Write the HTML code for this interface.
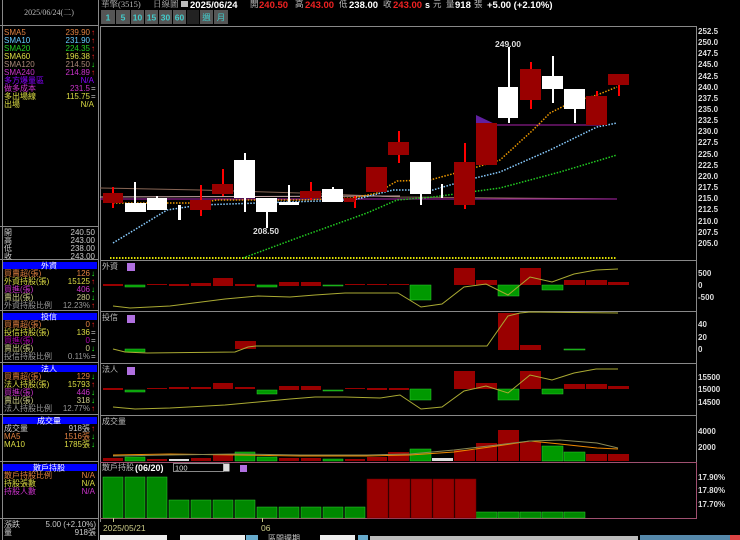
<!DOCTYPE html>
<html><head><meta charset="utf-8"><style>
body{margin:0;background:#000;width:740px;height:540px;overflow:hidden;font-family:"Liberation Sans","Noto Sans CJK TC",sans-serif}
svg{display:block}
text{font-family:"Liberation Sans","Noto Sans CJK TC",sans-serif}
.s{font-family:"Liberation Serif","Noto Serif CJK SC",serif}
</style></head><body>
<svg width="740" height="540" viewBox="0 0 740 540" xmlns="http://www.w3.org/2000/svg">
<rect width="740" height="540" fill="#000"/>
<g stroke="#888" stroke-width="1" fill="none">
<line x1="98.5" y1="0" x2="98.5" y2="540"/>
<line x1="2.5" y1="0" x2="2.5" y2="540"/>
<line x1="0" y1="25.5" x2="98" y2="25.5"/>
<line x1="0" y1="226.5" x2="98" y2="226.5"/>
<line x1="0" y1="259.5" x2="98" y2="259.5"/>
<line x1="0" y1="310.5" x2="98" y2="310.5"/>
<line x1="0" y1="362.5" x2="98" y2="362.5"/>
<line x1="0" y1="414.5" x2="98" y2="414.5"/>
<line x1="0" y1="461.5" x2="98" y2="461.5"/>
<line x1="0" y1="518.5" x2="98" y2="518.5"/>
</g>
<g font-size="8" class="s">
<text x="49" y="15" fill="#bbb" text-anchor="middle" class="s">2025/06/24(二)</text>
<text x="4" y="35" fill="#e08040">SMA5</text><text x="90" y="35" fill="#e08040" text-anchor="end">239.90</text><text x="91" y="35" fill="#f22">↑</text>
<text x="4" y="43" fill="#6cf">SMA10</text><text x="90" y="43" fill="#6cf" text-anchor="end">231.90</text><text x="91" y="43" fill="#f22">↑</text>
<text x="4" y="51" fill="#2c2">SMA20</text><text x="90" y="51" fill="#2c2" text-anchor="end">224.35</text><text x="91" y="51" fill="#f22">↑</text>
<text x="4" y="59" fill="#dd4">SMA60</text><text x="90" y="59" fill="#dd4" text-anchor="end">196.38</text><text x="91" y="59" fill="#f22">↑</text>
<text x="4" y="67" fill="#a87">SMA120</text><text x="90" y="67" fill="#a87" text-anchor="end">214.50</text><text x="91" y="67" fill="#2f2">↓</text>
<text x="4" y="75" fill="#c3c">SMA240</text><text x="90" y="75" fill="#c3c" text-anchor="end">214.89</text><text x="91" y="75" fill="#f22">↑</text>
<text x="4" y="83" fill="#80f">多方爆量區</text><text x="94" y="83" fill="#80f" text-anchor="end">N/A</text>
<text x="4" y="91" fill="#c3c">做多成本</text><text x="90" y="91" fill="#c3c" text-anchor="end">231.5</text><text x="91" y="91" fill="#ccc">=</text>
<text x="4" y="99" fill="#dd4">多出場線</text><text x="90" y="99" fill="#dd4" text-anchor="end">115.75</text><text x="91" y="99" fill="#ccc">=</text>
<text x="4" y="107" fill="#dd4">出場</text><text x="94" y="107" fill="#dd4" text-anchor="end">N/A</text>

<g fill="#ccc"><text x="4" y="235">開</text><text x="95" y="235" text-anchor="end">240.50</text>
<text x="4" y="243">高</text><text x="95" y="243" text-anchor="end">243.00</text>
<text x="4" y="251">低</text><text x="95" y="251" text-anchor="end">238.00</text>
<text x="4" y="259">收</text><text x="95" y="259" text-anchor="end">243.00</text></g>

<rect x="3" y="262" width="94" height="7" fill="#00f"/><text x="49" y="268.5" fill="#fff" text-anchor="middle">外資</text>
<text x="4" y="276" fill="#e08040">買賣超(張)</text><text x="90" y="276" fill="#e08040" text-anchor="end">126</text><text x="91" y="276" fill="#2f2">↓</text>
<text x="4" y="284" fill="#dd4">外資持股(張)</text><text x="90" y="284" fill="#dd4" text-anchor="end">15125</text><text x="91" y="284" fill="#f22">↑</text>
<text x="4" y="292" fill="#c3c">買進(張)</text><text x="90" y="292" fill="#c3c" text-anchor="end">406</text><text x="91" y="292" fill="#2f2">↓</text>
<text x="4" y="300" fill="#cc8">賣出(張)</text><text x="90" y="300" fill="#cc8" text-anchor="end">280</text><text x="91" y="300" fill="#2f2">↓</text>
<text x="4" y="308" fill="#999">外資持股比例</text><text x="90" y="308" fill="#999" text-anchor="end">12.23%</text><text x="91" y="308" fill="#f22">↑</text>

<rect x="3" y="313" width="94" height="7" fill="#00f"/><text x="49" y="319.5" fill="#fff" text-anchor="middle">投信</text>
<text x="4" y="327" fill="#e08040">買賣超(張)</text><text x="90" y="327" fill="#e08040" text-anchor="end">0</text><text x="91" y="327" fill="#f22">↑</text>
<text x="4" y="335" fill="#dd4">投信持股(張)</text><text x="90" y="335" fill="#dd4" text-anchor="end">136</text><text x="91" y="335" fill="#ccc">=</text>
<text x="4" y="343" fill="#a0a">買進(張)</text><text x="90" y="343" fill="#a0a" text-anchor="end">0</text><text x="91" y="343" fill="#ccc">=</text>
<text x="4" y="351" fill="#cc8">賣出(張)</text><text x="90" y="351" fill="#cc8" text-anchor="end">0</text><text x="91" y="351" fill="#2f2">↓</text>
<text x="4" y="359" fill="#999">投信持股比例</text><text x="90" y="359" fill="#999" text-anchor="end">0.11%</text><text x="91" y="359" fill="#ccc">=</text>

<rect x="3" y="365" width="94" height="7" fill="#00f"/><text x="49" y="371.5" fill="#fff" text-anchor="middle">法人</text>
<text x="4" y="379" fill="#e08040">買賣超(張)</text><text x="90" y="379" fill="#e08040" text-anchor="end">129</text><text x="91" y="379" fill="#2f2">↓</text>
<text x="4" y="387" fill="#dd4">法人持股(張)</text><text x="90" y="387" fill="#dd4" text-anchor="end">15793</text><text x="91" y="387" fill="#f22">↑</text>
<text x="4" y="395" fill="#c3c">買進(張)</text><text x="90" y="395" fill="#c3c" text-anchor="end">446</text><text x="91" y="395" fill="#2f2">↓</text>
<text x="4" y="403" fill="#cc8">賣出(張)</text><text x="90" y="403" fill="#cc8" text-anchor="end">318</text><text x="91" y="403" fill="#2f2">↓</text>
<text x="4" y="411" fill="#999">法人持股比例</text><text x="90" y="411" fill="#999" text-anchor="end">12.77%</text><text x="91" y="411" fill="#f22">↑</text>

<rect x="3" y="417" width="94" height="7" fill="#00f"/><text x="49" y="423.5" fill="#fff" text-anchor="middle">成交量</text>
<text x="4" y="431" fill="#ccc">成交量</text><text x="90" y="431" fill="#ccc" text-anchor="end">918張</text><text x="91" y="431" fill="#f22">↑</text>
<text x="4" y="439" fill="#e08040">MA5</text><text x="90" y="439" fill="#e08040" text-anchor="end">1516張</text><text x="91" y="439" fill="#2f2">↓</text>
<text x="4" y="447" fill="#dd4">MA10</text><text x="90" y="447" fill="#dd4" text-anchor="end">1785張</text><text x="91" y="447" fill="#2f2">↓</text>

<rect x="3" y="464" width="94" height="7" fill="#00f"/><text x="49" y="470.5" fill="#fff" text-anchor="middle">散戶持股</text>
<text x="4" y="478" fill="#e08040">散戶持股比例</text><text x="95" y="478" fill="#e08040" text-anchor="end">N/A</text>
<text x="4" y="486" fill="#dd4">持股張數</text><text x="95" y="486" fill="#dd4" text-anchor="end">N/A</text>
<text x="4" y="494" fill="#c3c">持股人數</text><text x="95" y="494" fill="#c3c" text-anchor="end">N/A</text>
<text x="4" y="527" fill="#ccc">漲跌</text><text x="96" y="527" fill="#ccc" text-anchor="end">5.00 (+2.10%)</text>
<text x="4" y="535" fill="#ccc">量</text><text x="96" y="535" fill="#ccc" text-anchor="end">918張</text>
</g>

<g font-size="8.5">
<text x="101" y="7" fill="#bbb" class="s">華擎(3515)</text>
<text x="153" y="7" fill="#bbb" class="s">日線圖</text>
<rect x="181" y="1" width="7" height="6" fill="#bbb"/>
<text x="190" y="8" fill="#fff" font-weight="bold" font-size="9.5">2025/06/24</text>
<text x="250" y="7" fill="#bbb">開</text><text x="259" y="8" fill="#e22" font-weight="bold" font-size="9.5">240.50</text>
<text x="295" y="7" fill="#bbb">高</text><text x="305" y="8" fill="#e22" font-weight="bold" font-size="9.5">243.00</text>
<text x="339" y="7" fill="#bbb">低</text><text x="349" y="8" fill="#fff" font-weight="bold" font-size="9.5">238.00</text>
<text x="383" y="7" fill="#bbb">收</text><text x="393" y="8" fill="#e22" font-weight="bold" font-size="9.5">243.00</text>
<text x="425" y="8" fill="#fff" font-weight="bold" font-size="9">s</text><text x="433" y="7" fill="#bbb">元</text>
<text x="446" y="7" fill="#bbb">量</text><text x="455" y="8" fill="#fff" font-weight="bold" font-size="9.5">918</text>
<text x="474" y="7" fill="#bbb">張</text>
<text x="487" y="8" fill="#fff" font-weight="bold" font-size="9.5">+5.00 (+2.10%)</text>
</g>
<g font-size="8.5" fill="#4cc" font-weight="bold" text-anchor="middle">
<rect x="101" y="10" width="14" height="14" fill="#555"/><text x="108" y="20.5">1</text>
<rect x="116" y="10" width="14" height="14" fill="#555"/><text x="123" y="20.5">5</text>
<rect x="131" y="10" width="13" height="14" fill="#555"/><text x="137.5" y="20.5">10</text>
<rect x="145" y="10" width="13" height="14" fill="#555"/><text x="151.5" y="20.5">15</text>
<rect x="159" y="10" width="13" height="14" fill="#555"/><text x="165.5" y="20.5">30</text>
<rect x="173" y="10" width="13" height="14" fill="#555"/><text x="179.5" y="20.5">60</text>
<rect x="187" y="10" width="12" height="14" fill="#222"/>
<rect x="200" y="10" width="13" height="14" fill="#555"/><text x="206.5" y="20.5" font-weight="normal">週</text>
<rect x="214" y="10" width="14" height="14" fill="#555"/><text x="221" y="20.5" font-weight="normal">月</text>
</g>

<g stroke="#888" fill="none">
<line x1="100" y1="26.5" x2="697" y2="26.5"/>
<line x1="100.5" y1="26" x2="100.5" y2="522"/>
<line x1="696.5" y1="26" x2="696.5" y2="462"/>
<line x1="100" y1="260.5" x2="697" y2="260.5"/>
<line x1="100" y1="311.5" x2="697" y2="311.5"/>
<line x1="100" y1="363.5" x2="697" y2="363.5"/>
<line x1="100" y1="415.5" x2="697" y2="415.5"/>
<line x1="100" y1="462.5" x2="697" y2="462.5" stroke="#a05070"/>
<line x1="100" y1="518.5" x2="697" y2="518.5" stroke="#a05070"/>
<line x1="696.5" y1="462" x2="696.5" y2="519" stroke="#a05070"/>
</g>
<g font-size="8" fill="#ddd" font-weight="bold">
<text x="698" y="34">252.5</text><text x="698" y="45">250.0</text><text x="698" y="56">247.5</text><text x="698" y="67">245.0</text>
<text x="698" y="79">242.5</text><text x="698" y="90">240.0</text><text x="698" y="101">237.5</text><text x="698" y="112">235.0</text>
<text x="698" y="123">232.5</text><text x="698" y="134">230.0</text><text x="698" y="145">227.5</text><text x="698" y="157">225.0</text>
<text x="698" y="168">222.5</text><text x="698" y="179">220.0</text><text x="698" y="190">217.5</text><text x="698" y="201">215.0</text>
<text x="698" y="212">212.5</text><text x="698" y="224">210.0</text><text x="698" y="235">207.5</text><text x="698" y="246">205.0</text>
<text x="698" y="276">500</text><text x="698" y="288">0</text><text x="698" y="300">-500</text>
<text x="698" y="327">40</text><text x="698" y="340">20</text><text x="698" y="352">0</text>
<text x="698" y="380">15500</text><text x="698" y="392">15000</text><text x="698" y="405">14500</text>
<text x="698" y="434">4000</text><text x="698" y="450">2000</text>
<text x="698" y="480">17.90%</text><text x="698" y="493">17.80%</text><text x="698" y="507">17.70%</text>
</g>

<polyline points="100,188 200,190 300,193 400,197 617,199" stroke="#865" fill="none"/>
<line x1="100" y1="199" x2="617" y2="199" stroke="#a2a"/>
<line x1="100" y1="197" x2="400" y2="196" stroke="#caa"/>
<line x1="476" y1="125" x2="600" y2="125" stroke="#a2a"/>
<polygon points="476,115 497,125 476,135" fill="#6020a0"/>
<polyline points="110,258 617,258" stroke="#dd0" stroke-width="2" stroke-dasharray="1.5,1.5" fill="none"/>
<polyline points="243,258 300,237 367,213 397,200 433,197 500,188 560,172 617,155" stroke="#2c2" stroke-width="1.5" stroke-dasharray="1.5,1.5" fill="none"/>
<polyline points="113,243 167,210 200,205 287,202 353,200 393,190 433,190 467,180 500,172 550,150 597,127 617,123" stroke="#8cf" stroke-width="1.5" stroke-dasharray="1.5,1.5" fill="none"/>
<polyline points="113,203 200,203 217,200 300,200 353,198 377,193 397,181 430,180 467,170 500,160 533,130 550,113 570,103 597,95 617,87" stroke="#e90" stroke-width="1.5" stroke-dasharray="1.5,1.5" fill="none"/>

<g fill="#fff">
<rect x="134" y="182" width="2" height="30"/><rect x="125" y="203" width="21" height="9"/>
<rect x="156" y="196" width="2" height="14"/><rect x="147" y="198" width="20" height="12"/>
<rect x="178" y="205" width="3" height="15"/>
<rect x="244" y="153" width="2" height="59"/><rect x="234" y="160" width="21" height="38"/>
<rect x="266" y="198" width="2" height="30"/><rect x="256" y="198" width="21" height="14"/>
<rect x="288" y="185" width="2" height="20"/><rect x="279" y="202" width="20" height="3"/>
<rect x="332" y="187" width="2" height="15"/><rect x="322" y="189" width="21" height="13"/>
<rect x="420" y="194" width="2" height="11"/><rect x="410" y="162" width="21" height="32"/>
<rect x="441" y="184" width="2" height="14"/>
<rect x="508" y="47" width="2" height="76"/><rect x="498" y="87" width="20" height="31"/>
<rect x="552" y="56" width="2" height="47"/><rect x="542" y="76" width="21" height="13"/>
<rect x="574" y="89" width="2" height="34"/><rect x="564" y="89" width="21" height="20"/>
</g>
<g fill="#f00">
<rect x="112" y="187" width="2" height="21"/><rect x="200" y="185" width="2" height="31"/>
<rect x="222" y="169" width="2" height="27"/><rect x="310" y="182" width="2" height="18"/>
<rect x="354" y="196" width="2" height="12"/><rect x="398" y="131" width="2" height="32"/>
<rect x="464" y="143" width="2" height="66"/><rect x="530" y="62" width="2" height="47"/>
<rect x="596" y="91" width="2" height="34"/><rect x="618" y="84" width="2" height="12"/>
</g>
<g fill="#900">
<rect x="103" y="193" width="20" height="10"/><rect x="190" y="200" width="21" height="10"/>
<rect x="212" y="184" width="21" height="10"/><rect x="300" y="191" width="21" height="7"/>
<rect x="344" y="198" width="11" height="4"/><rect x="366" y="167" width="21" height="25"/>
<rect x="388" y="142" width="21" height="13"/><rect x="454" y="162" width="21" height="43"/>
<rect x="476" y="123" width="21" height="42"/><rect x="520" y="69" width="21" height="31"/>
<rect x="586" y="96" width="21" height="29"/><rect x="608" y="74" width="21" height="11"/>
</g>
<g font-size="8.5" fill="#ddd" font-weight="bold"><text x="495" y="47">249.00</text><text x="253" y="234">208.50</text></g>

<g font-size="8" fill="#bbb" class="s">
<text x="102" y="269">外資</text><text x="102" y="320">投信</text><text x="102" y="372">法人</text><text x="102" y="424">成交量</text>
<text x="102" y="470">散戶持股</text><text x="135" y="471" fill="#fff" font-weight="bold" font-size="9">(06/20)</text>
</g>
<g fill="#b070e0"><rect x="127" y="263" width="8" height="8"/><rect x="127" y="315" width="8" height="8"/><rect x="127" y="367" width="8" height="8"/><rect x="240" y="465" width="7" height="7"/></g>
<rect x="173.5" y="463.5" width="50" height="8" fill="#000" stroke="#888"/><text x="175" y="470.5" font-size="7.5" fill="#ddd">100</text>
<rect x="223.5" y="463.5" width="6" height="8" fill="#ddd"/>

<g fill="#900">
<rect x="103" y="284" width="20" height="2"/><rect x="147" y="284" width="20" height="1"/><rect x="169" y="284" width="20" height="2"/><rect x="191" y="283" width="20" height="3"/>
<rect x="213" y="278" width="20" height="8"/><rect x="235" y="284" width="20" height="2"/><rect x="279" y="282" width="20" height="4"/><rect x="301" y="282" width="20" height="4"/>
<rect x="345" y="284" width="20" height="1"/><rect x="367" y="284" width="20" height="1"/><rect x="389" y="284" width="20" height="1"/>
<rect x="454" y="268" width="21" height="17"/><rect x="476" y="280" width="21" height="5"/><rect x="520" y="268" width="21" height="17"/>
<rect x="564" y="280" width="21" height="5"/><rect x="586" y="280" width="21" height="5"/><rect x="608" y="282" width="21" height="3"/>
</g>
<g fill="#090" stroke="#3c3" stroke-width="0.5">
<rect x="125" y="285" width="20" height="2"/><rect x="257" y="285" width="20" height="2"/><rect x="323" y="285" width="20" height="1"/>
<rect x="410" y="285" width="21" height="15"/><rect x="498" y="285" width="21" height="11"/><rect x="542" y="285" width="21" height="5"/>
</g>
<polyline points="113,306 130,308 170,306 225,299 258,296 290,297 315,295 345,293 398,293 421,307 442,304 464,287 486,284 508,295 530,277 552,282 574,274 596,270 618,269" stroke="#aa3" fill="none"/>
<g fill="#090" stroke="#3c3" stroke-width="0.5"><rect x="125" y="349" width="20" height="3"/><rect x="564" y="349" width="21" height="1"/></g>
<g fill="#900"><rect x="235" y="341" width="21" height="8"/><rect x="498" y="313" width="21" height="37"/><rect x="520" y="345" width="21" height="5"/></g>
<polyline points="113,349 125,352 147,353 235,352 248,347 256,346 487,346 508,316 520,313 530,312 618,313" stroke="#aa3" fill="none"/>
<g fill="#900">
<rect x="103" y="388" width="20" height="2"/><rect x="147" y="388" width="20" height="1"/><rect x="169" y="387" width="20" height="2"/><rect x="191" y="387" width="20" height="2"/>
<rect x="213" y="383" width="20" height="6"/><rect x="235" y="387" width="20" height="2"/><rect x="279" y="386" width="20" height="4"/><rect x="301" y="386" width="20" height="4"/>
<rect x="345" y="388" width="20" height="1"/><rect x="367" y="388" width="20" height="2"/><rect x="389" y="388" width="20" height="2"/>
<rect x="454" y="371" width="21" height="18"/><rect x="476" y="383" width="21" height="6"/><rect x="520" y="371" width="21" height="18"/>
<rect x="564" y="384" width="21" height="5"/><rect x="586" y="384" width="21" height="5"/><rect x="608" y="386" width="21" height="3"/>
</g>
<g fill="#090" stroke="#3c3" stroke-width="0.5">
<rect x="125" y="390" width="20" height="2"/><rect x="257" y="390" width="20" height="4"/><rect x="323" y="390" width="20" height="1"/>
<rect x="410" y="389" width="21" height="11"/><rect x="498" y="389" width="21" height="11"/><rect x="542" y="389" width="21" height="5"/>
</g>
<polyline points="113,407 135,409 170,408 225,405 258,402 290,399 315,397 345,397 380,398 400,395 421,409 442,407 464,391 486,386 508,393 530,375 552,380 574,373 596,369 618,369" stroke="#aa3" fill="none"/>

<g fill="#900">
<rect x="103" y="458" width="20" height="3"/><rect x="147" y="459" width="20" height="2"/><rect x="191" y="458" width="20" height="3"/><rect x="213" y="454" width="20" height="7"/>
<rect x="279" y="458" width="20" height="3"/><rect x="301" y="458" width="20" height="3"/><rect x="345" y="459" width="20" height="2"/><rect x="367" y="457" width="20" height="4"/>
<rect x="388" y="452" width="21" height="9"/><rect x="454" y="450" width="21" height="11"/><rect x="476" y="443" width="21" height="18"/><rect x="498" y="430" width="21" height="31"/>
<rect x="520" y="442" width="21" height="19"/><rect x="586" y="454" width="21" height="7"/><rect x="608" y="454" width="21" height="7"/>
</g>
<g fill="#090" stroke="#3c3" stroke-width="0.5">
<rect x="125" y="457" width="20" height="4"/><rect x="235" y="452" width="20" height="9"/><rect x="257" y="457" width="20" height="4"/><rect x="323" y="459" width="20" height="2"/>
<rect x="410" y="449" width="21" height="12"/><rect x="542" y="446" width="21" height="15"/><rect x="564" y="452" width="21" height="9"/>
</g>
<rect x="169" y="459" width="20" height="2" fill="#ddd"/><rect x="432" y="458" width="21" height="3" fill="#ddd"/>
<polyline points="113,455 170,454 235,455 300,456 367,456 410,455 454,452 497,446 530,441 560,444 597,448 618,449" stroke="#e80" fill="none"/>
<polyline points="113,456 170,455 235,454 300,455 367,455 410,454 454,450 497,445 530,441 560,440 597,443 618,448" stroke="#885" fill="none"/>

<g fill="#080" stroke="#3c3" stroke-width="0.5">
<rect x="103" y="477" width="20" height="41"/><rect x="125" y="477" width="20" height="41"/><rect x="147" y="477" width="20" height="41"/>
<rect x="169" y="500" width="20" height="18"/><rect x="191" y="500" width="20" height="18"/><rect x="213" y="500" width="20" height="18"/><rect x="235" y="500" width="20" height="18"/>
<rect x="257" y="507" width="20" height="11"/><rect x="279" y="507" width="20" height="11"/><rect x="301" y="507" width="20" height="11"/><rect x="323" y="507" width="20" height="11"/><rect x="345" y="507" width="20" height="11"/>
<rect x="476" y="512" width="21" height="6"/><rect x="498" y="512" width="21" height="6"/><rect x="520" y="512" width="21" height="6"/><rect x="542" y="512" width="21" height="6"/><rect x="564" y="512" width="21" height="6"/>
</g>
<g fill="#900" stroke="#600" stroke-width="0.5">
<rect x="367" y="479" width="21" height="39"/><rect x="389" y="479" width="21" height="39"/><rect x="411" y="479" width="21" height="39"/><rect x="433" y="479" width="21" height="39"/><rect x="455" y="479" width="21" height="39"/>
</g>
<line x1="113.5" y1="518" x2="113.5" y2="522" stroke="#cc8"/><line x1="262.5" y1="518" x2="262.5" y2="522" stroke="#cc8"/>
<text x="103" y="531" font-size="8.5" fill="#cc8">2025/05/21</text><text x="261" y="531" font-size="8.5" fill="#cc8">06</text>
<rect x="100" y="535" width="67" height="5" fill="#eee"/><rect x="180" y="535" width="65" height="5" fill="#eee"/>
<rect x="246" y="535" width="12" height="5" fill="#6ac"/>
<text x="268" y="541" font-size="8" fill="#ccc">區間週期</text>
<rect x="320" y="535" width="35" height="5" fill="#eee"/>
<rect x="358" y="535" width="10" height="5" fill="#6ac"/><rect x="370" y="536" width="268" height="4" fill="#bbb"/>
<rect x="640" y="535" width="100" height="5" fill="#58a"/><rect x="730" y="535" width="10" height="5" fill="#d44"/>
</svg>
</body></html>
